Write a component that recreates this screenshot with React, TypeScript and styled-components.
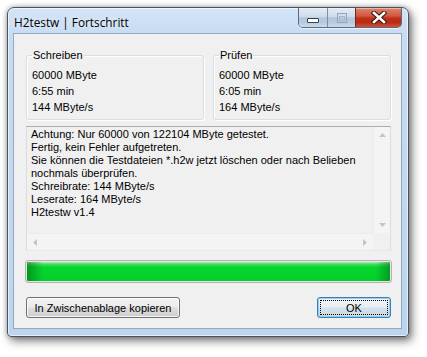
import React from "react";
import styled, { createGlobalStyle } from "styled-components";

const GlobalStyle = createGlobalStyle`
  html, body { margin: 0; padding: 0; background: #ffffff; }
  body {
    width: 427px; height: 357px; overflow: hidden;
    font-family: "Liberation Sans", Arial, sans-serif;
    font-size: 11px; color: #000;
  }
`;

const Page = styled.div`
  width: 427px;
  height: 357px;
  box-sizing: border-box;
  padding: 7px 0 0 7px;
`;

const Window = styled.div`
  width: 402px;
  height: 330px;
  box-sizing: border-box;
  border: 1px solid #4a5461;
  border-radius: 7px 7px 4px 4px;
  background: linear-gradient(180deg, #d3e5f7 0px, #c7dcf2 25px, #bcd4ed 100%);
  box-shadow: inset 0 0 0 1px rgba(255, 255, 255, 0.6), 3px 4px 10px rgba(0, 0, 0, 0.5),
    0 0 5px rgba(0, 0, 0, 0.3);
  display: flex;
  flex-direction: column;
`;

const TitleBar = styled.div`
  height: 25px;
  display: flex;
  justify-content: space-between;
  align-items: flex-start;
`;

const Title = styled.div`
  font-family: "Open Sans", "Noto Sans", sans-serif;
  font-size: 11.8px;
  line-height: 16px;
  padding: 6px 0 0 6px;
  color: #000;
  text-shadow: 0 0 6px rgba(255, 255, 255, 0.9);
`;

const CaptionGroup = styled.div`
  display: flex;
  margin-right: 6px;
  height: 19px;
  border: 1px solid #5c6a7c;
  border-top: none;
  border-radius: 0 0 5px 5px;
  overflow: hidden;
  box-shadow: 0 1px 0 rgba(255, 255, 255, 0.6);
`;

const CaptionButton = styled.div<{ $w: number; $close?: boolean }>`
  width: ${(p) => p.$w}px;
  height: 19px;
  display: flex;
  align-items: center;
  justify-content: center;
  box-sizing: border-box;
  border-left: 1px solid ${(p) => (p.$close ? "#6e2a20" : "#7d8da2")};
  box-shadow: inset 0 1px 0 rgba(255, 255, 255, 0.4);
  background-color: ${(p) => (p.$close ? "#c63a22" : "#c2d2e4")};
  background-image: ${(p) =>
    p.$close
      ? "linear-gradient(180deg, #dd8570 0%, #d0573f 42%, #bf2e15 54%, #bb2c14 76%, #cf5038 100%)"
      : "linear-gradient(180deg, #e3ebf4 0%, #cfdcea 45%, #b3c6db 52%, #b8cadf 78%, #cddcec 100%)"};
  &:first-child {
    border-left: none;
  }
`;

const Client = styled.div`
  margin: 0 6px 0 5px;
  height: 296px;
  box-sizing: border-box;
  border: 1px solid #93a9c0;
  background: #f0f0f0;
  padding: 21px 10px 10px 12px;
  display: flex;
  flex-direction: column;
`;

const GroupRow = styled.div`
  display: flex;
  gap: 9px;
  height: 65px;
`;

const Group = styled.div`
  position: relative;
  flex: 1;
  box-sizing: border-box;
  border: 1px solid #d5dfe5;
  border-radius: 3px;
  box-shadow: inset 1px 1px 0 #ffffff, 1px 1px 0 #ffffff;
  padding: 11px 5px 0 5px;
`;

const Legend = styled.div`
  position: absolute;
  left: 5px;
  top: -7px;
  padding: 0 1px;
  line-height: 13px;
  background: #f0f0f0;
`;

const Line = styled.div`
  line-height: 16px;
  white-space: pre;
`;

const EditBox = styled.div`
  margin-top: 6px;
  height: 125px;
  box-sizing: border-box;
  border: 1px solid #dadde3;
  border-top-color: #abadb3;
  border-bottom-color: #e3e9ef;
  display: grid;
  grid-template-columns: 1fr 17px;
  grid-template-rows: 1fr 17px;
`;

const EditText = styled.div`
  padding: 1px 0 0 4px;
  line-height: 13px;
  white-space: pre;
  overflow: hidden;
`;

const ScrollV = styled.div`
  background: #f4f4f4;
  border-left: 1px solid #ebebeb;
  display: flex;
  flex-direction: column;
  justify-content: space-between;
  align-items: center;
  padding: 6px 0;
`;

const ScrollH = styled.div`
  background: #f4f4f4;
  border-top: 1px solid #ebebeb;
  display: flex;
  justify-content: space-between;
  align-items: center;
  padding: 0 6px;
`;

const Corner = styled.div`
  background: #f0f0f0;
`;

const Progress = styled.div`
  margin: 9px -1px 0 -1px;
  height: 23px;
  box-sizing: border-box;
  border: 1px solid #b2b2b2;
  border-radius: 3px;
  background: #e6e6e6;
  padding: 1px;
`;

const ProgressFill = styled.div`
  height: 100%;
  border-radius: 1px;
  background:
    linear-gradient(90deg, rgba(0, 90, 20, 0.5) 0px, rgba(0, 90, 20, 0) 16px,
      rgba(0, 90, 20, 0) calc(100% - 14px), rgba(0, 90, 20, 0.45) 100%),
    linear-gradient(180deg, #b3ebb9 0px, #4ade64 2px, #08d42e 5px, #01d029 100%);
`;

const ButtonRow = styled.div`
  margin-top: 14px;
  display: flex;
  justify-content: space-between;
`;

const Button = styled.div<{ $w: number; $default?: boolean }>`
  position: relative;
  width: ${(p) => p.$w}px;
  height: 21px;
  box-sizing: border-box;
  border: 1px solid ${(p) => (p.$default ? "#3c7fb1" : "#707070")};
  border-radius: 3px;
  display: flex;
  align-items: center;
  justify-content: center;
  line-height: 13px;
  background: ${(p) =>
    p.$default
      ? "linear-gradient(180deg, #f1f5f8 0%, #e6eef4 48%, #d6e2ea 52%, #cbd9e3 100%)"
      : "linear-gradient(180deg, #f2f2f2 0%, #ebebeb 48%, #dddddd 52%, #cfcfcf 100%)"};
  box-shadow: ${(p) =>
    p.$default ? "inset 0 0 0 1px #8fd0f4" : "inset 0 0 0 1px rgba(255,255,255,0.8)"};
`;

const FocusRing = styled.div`
  position: absolute;
  inset: 2px;
  border: 1px dotted #000;
`;

const ButtonLabel = styled.span`
  position: relative;
  padding-top: 1px;
`;

const lines = [
  "Achtung: Nur 60000 von 122104 MByte getestet.",
  "Fertig, kein Fehler aufgetreten.",
  "Sie können die Testdateien *.h2w jetzt löschen oder nach Belieben",
  "nochmals überprüfen.",
  "Schreibrate: 144 MByte/s",
  "Leserate: 164 MByte/s",
  "H2testw v1.4",
];

const Arrow = ({ dir }: { dir: "up" | "down" | "left" | "right" }) => {
  const pts = {
    up: "0,4 3.5,0 7,4",
    down: "0,0 3.5,4 7,0",
    left: "4,0 0,3.5 4,7",
    right: "0,0 4,3.5 0,7",
  }[dir];
  const vert = dir === "up" || dir === "down";
  return (
    <svg width={vert ? 7 : 4} height={vert ? 4 : 7} viewBox={vert ? "0 0 7 4" : "0 0 4 7"}>
      <polygon points={pts} fill="#c4c4c4" />
    </svg>
  );
};

export default function App() {
  return (
    <>
      <GlobalStyle />
      <Page>
        <Window>
          <TitleBar>
            <Title>H2testw | Fortschritt</Title>
            <CaptionGroup>
              <CaptionButton $w={28}>
                <svg width="12" height="10" viewBox="0 0 12 10">
                  <rect x="0.5" y="5.5" width="11" height="4" fill="#ffffff" stroke="#36404e" strokeWidth="1" rx="0.5" />
                </svg>
              </CaptionButton>
              <CaptionButton $w={28}>
                <svg width="10" height="10" viewBox="0 0 10 10">
                  <rect x="0.5" y="0.5" width="9" height="9" fill="none" stroke="#94a6bc" strokeWidth="1" />
                  <rect x="2.5" y="3.5" width="5" height="4" fill="none" stroke="#a8b8cb" strokeWidth="1" />
                </svg>
              </CaptionButton>
              <CaptionButton $w={46} $close>
                <svg width="16" height="13" viewBox="0 0 16 13">
                  <path d="M3 2 L13 11 M13 2 L3 11" stroke="#3e1510" strokeWidth="4.6" strokeLinecap="square" />
                  <path d="M3 2 L13 11 M13 2 L3 11" stroke="#ffffff" strokeWidth="2.6" strokeLinecap="square" />
                </svg>
              </CaptionButton>
            </CaptionGroup>
          </TitleBar>
          <Client>
            <GroupRow>
              <Group>
                <Legend>Schreiben</Legend>
                <Line>60000 MByte</Line>
                <Line>6:55 min</Line>
                <Line>144 MByte/s</Line>
              </Group>
              <Group>
                <Legend>Prüfen</Legend>
                <Line>60000 MByte</Line>
                <Line>6:05 min</Line>
                <Line>164 MByte/s</Line>
              </Group>
            </GroupRow>
            <EditBox>
              <EditText>
                {lines.map((l) => (
                  <div key={l}>{l}</div>
                ))}
              </EditText>
              <ScrollV>
                <Arrow dir="up" />
                <Arrow dir="down" />
              </ScrollV>
              <ScrollH>
                <Arrow dir="left" />
                <Arrow dir="right" />
              </ScrollH>
              <Corner />
            </EditBox>
            <Progress>
              <ProgressFill />
            </Progress>
            <ButtonRow>
              <Button $w={154}>
                <ButtonLabel>In Zwischenablage kopieren</ButtonLabel>
              </Button>
              <Button $w={74} $default>
                <FocusRing />
                <ButtonLabel>OK</ButtonLabel>
              </Button>
            </ButtonRow>
          </Client>
        </Window>
      </Page>
    </>
  );
}
